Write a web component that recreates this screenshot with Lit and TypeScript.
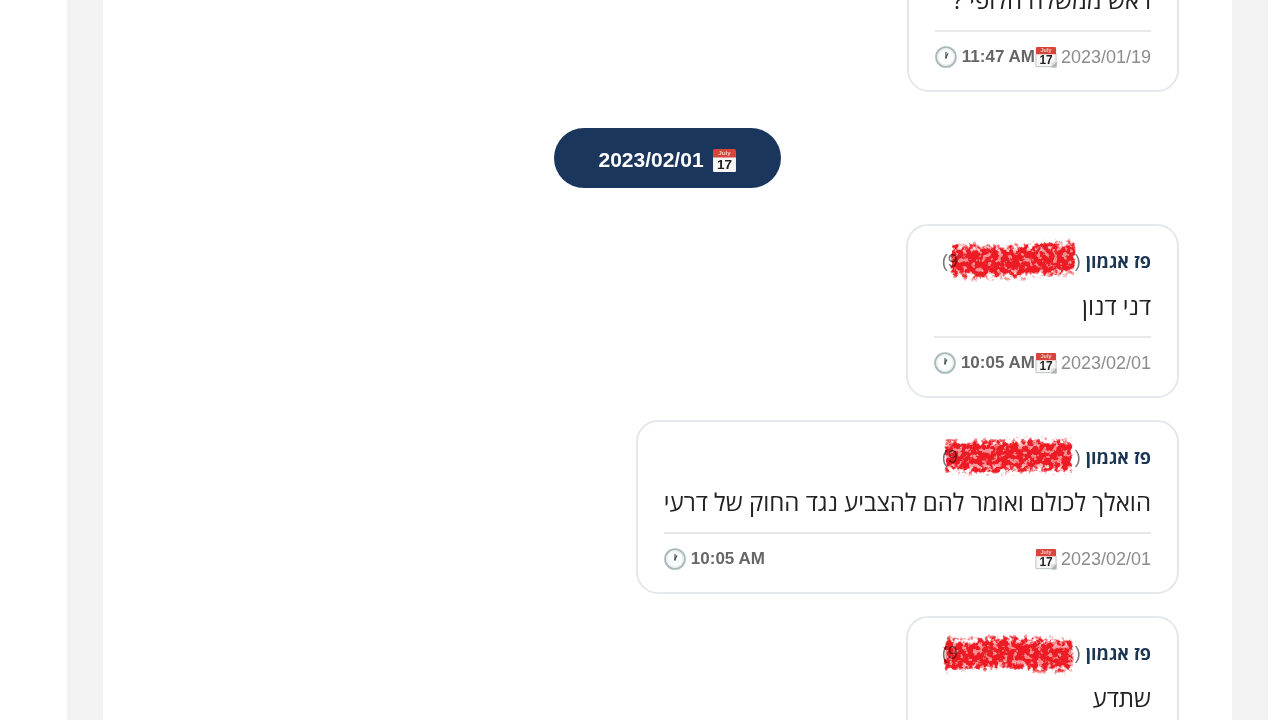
import { LitElement, html, css, svg } from "lit";
import { customElement, property } from "lit/decorators.js";

interface Message {
  sender: string;
  text: string;
  date: string;
  time: string;
  seed: number;
  stroke: string;
}

const wide = "M7 6L30 7 60 6 90 5 134 6 134 39 100 37 70 39 40 39 7 38Z";

const earlier: Message[] = [
  { sender: "פז אגמון", text: "ראש ממשלה חלופי ?", date: "2023/01/19", time: "11:47 AM", seed: 3, stroke: wide },
];

const february: Message[] = [
  {
    sender: "פז אגמון", text: "דני דנון", date: "2023/02/01", time: "10:05 AM", seed: 5,
    stroke: "M13 6L30 6 60 8 90 6 115 4 137 3 137 36 115 37 85 40 60 40 40 41 13 38Z",
  },
  {
    sender: "פז אגמון", text: "הואלך לכולם ואומר להם להצביע נגד החוק של דרעי", date: "2023/02/01", time: "10:05 AM", seed: 12,
    stroke: wide,
  },
  {
    sender: "פז אגמון", text: "שתדע", date: "2023/02/01", time: "10:06 AM", seed: 21,
    stroke: "M6 7L30 9 60 6 90 7 135 10 135 42 100 41 70 39 40 40 6 41Z",
  },
];

const calendar = (curl: boolean) => html`
  <svg class="icon" viewBox="0 0 24 24" aria-hidden="true">
    <path d="M1 4h22v18a1 1 0 0 1-1 1H2a1 1 0 0 1-1-1z" fill="#f7f7f7" />
    <path d="M1 9V2.500A1.500 1.500 0 0 1 2.500 1h19A1.500 1.500 0 0 1 23 2.500V9z" fill="#d8443c" />
    <text x="12" y="7" text-anchor="middle" font-size="6" font-weight="700" fill="#f6c9c4">July</text>
    <text x="12" y="20" text-anchor="middle" font-size="13" font-weight="700" fill="#222">17</text>
    ${curl
      ? svg`<path d="M1 9v13.500h22V9" fill="none" stroke="#b9bdbf" stroke-width="1" />
            <path d="M23.500 17v6.500H17z" fill="#aeb3b5" /><path d="M17 23.500l1-5.500 5.500-1z" fill="#d9dcdd" />`
      : null}
  </svg>`;

const clock = html`
  <svg class="icon" viewBox="0 0 24 24" aria-hidden="true">
    <circle cx="12" cy="12" r="10.800" fill="#fbfcfc" stroke="#a9b8ba" stroke-width="2" />
    <circle cx="12" cy="12" r="9" fill="none" stroke="#dfe6e6" stroke-width="1" />
    <path d="M12 13V7M12 12.500l2-4" stroke="#4b5355" stroke-width="1.300" stroke-linecap="round" fill="none" />
    <circle cx="12" cy="12.500" r="1" fill="#4b5355" />
  </svg>`;

@customElement("chat-message")
class ChatMessage extends LitElement {
  @property({ attribute: false }) message!: Message;

  static styles = css`
    :host {
      display: block;
      max-width: 70%;
    }
    .card {
      border: 2px solid #e4e8ed;
      border-radius: 22px;
      padding: 20px 26px;
      background: #fff;
    }
    .head {
      display: flex;
      align-items: center;
      gap: 5px;
      line-height: 30px;
      font-size: 18px;
    }
    .sender {
      font-weight: 700;
      color: #1c3553;
    }
    .phone {
      display: flex;
      color: #777;
      font-family: "Liberation Sans", sans-serif;
    }
    .number {
      position: relative;
      width: 127px;
      text-align: left;
      direction: ltr;
    }
    .scribble {
      position: absolute;
      top: -8px;
      left: -10px;
      width: 142px;
      height: 46px;
      mix-blend-mode: multiply;
    }
    .text {
      margin: 12px 0;
      font-size: 24px;
      line-height: 36px;
      color: #222;
    }
    .foot {
      display: flex;
      justify-content: space-between;
      border-top: 2px solid #e8e8e8;
      padding-top: 12px;
      line-height: 26px;
      white-space: nowrap;
      font-family: "Liberation Sans", sans-serif;
    }
    .date,
    .time {
      display: flex;
      align-items: center;
      gap: 4px;
      direction: ltr;
    }
    .date {
      font-size: 18px;
      color: #8c8c8c;
    }
    .time {
      gap: 5px;
      font-size: 17px;
      font-weight: 700;
      color: #666;
    }
    .icon {
      width: 22px;
      height: 22px;
    }
  `;

  render() {
    const m = this.message;
    return html`
      <article class="card">
        <header class="head">
          <span class="sender">${m.sender}</span>
          <span class="phone">(<span class="number">9
            <svg class="scribble" viewBox="0 0 142 46" aria-hidden="true">
              <filter id="chalk" x="0" y="0" width="142" height="46" filterUnits="userSpaceOnUse" color-interpolation-filters="sRGB">
                <feTurbulence type="fractalNoise" baseFrequency="0.2" numOctaves="3" seed=${m.seed} result="noise" />
                <feColorMatrix in="noise" type="matrix" values="0 0 0 0 0  0 0 0 0 0  0 0 0 0 0  0 0 0 3 -1" result="grain" />
                <feGaussianBlur in="SourceGraphic" stdDeviation="1 4" result="soft" />
                <feComposite in="soft" in2="grain" operator="arithmetic" k1="0" k2="2.2" k3="1.3" k4="-1.7" result="mix" />
                <feColorMatrix in="mix" type="matrix" values="0 0 0 0 0.93  0 0 0 0 0.11  0 0 0 0 0.14  0 0 0 1 0" />
              </filter>
              <path filter="url(#chalk)" fill="#000" d=${m.stroke} />
            </svg></span>)</span>
        </header>
        <p class="text">${m.text}</p>
        <footer class="foot">
          <span class="date">${calendar(true)}<time>${m.date}</time></span>
          <span class="time">${clock}<time>${m.time}</time></span>
        </footer>
      </article>
    `;
  }
}

@customElement("app-root")
class AppRoot extends LitElement {
  static styles = css`
    :host {
      display: block;
      height: 100vh;
      overflow: hidden;
      direction: rtl;
      background: #fff;
      font-family: "Open Sans", "Liberation Sans", sans-serif;
    }
    .frame {
      box-sizing: border-box;
      min-height: 100%;
      margin: 0 12px 0 67px;
      padding: 0 36px;
      background: #f3f3f3;
    }
    .chat {
      display: flex;
      flex-direction: column;
      align-items: flex-start;
      gap: 36px;
      padding: 0 53px;
      background: #fff;
    }
    .group {
      display: flex;
      flex-direction: column;
      align-items: flex-start;
      gap: 22px;
      width: 100%;
    }
    .earlier {
      margin-top: -82px;
    }
    .day {
      display: flex;
      align-items: center;
      align-self: center;
      gap: 8px;
      padding: 4px 44px 0;
      border-radius: 30px;
      background: #1b365d;
      color: #fff;
      font-size: 21px;
      font-weight: 700;
      line-height: 56px;
      font-family: "Liberation Sans", sans-serif;
    }
    .icon {
      width: 25px;
      height: 25px;
    }
  `;

  render() {
    return html`
      <main class="frame">
        <div class="chat">
          <section class="group earlier">
            ${earlier.map((m) => html`<chat-message .message=${m}></chat-message>`)}
          </section>
          <time class="day">${calendar(false)}<span>2023/02/01</span></time>
          <section class="group">
            ${february.map((m) => html`<chat-message .message=${m}></chat-message>`)}
          </section>
        </div>
      </main>
    `;
  }
}
